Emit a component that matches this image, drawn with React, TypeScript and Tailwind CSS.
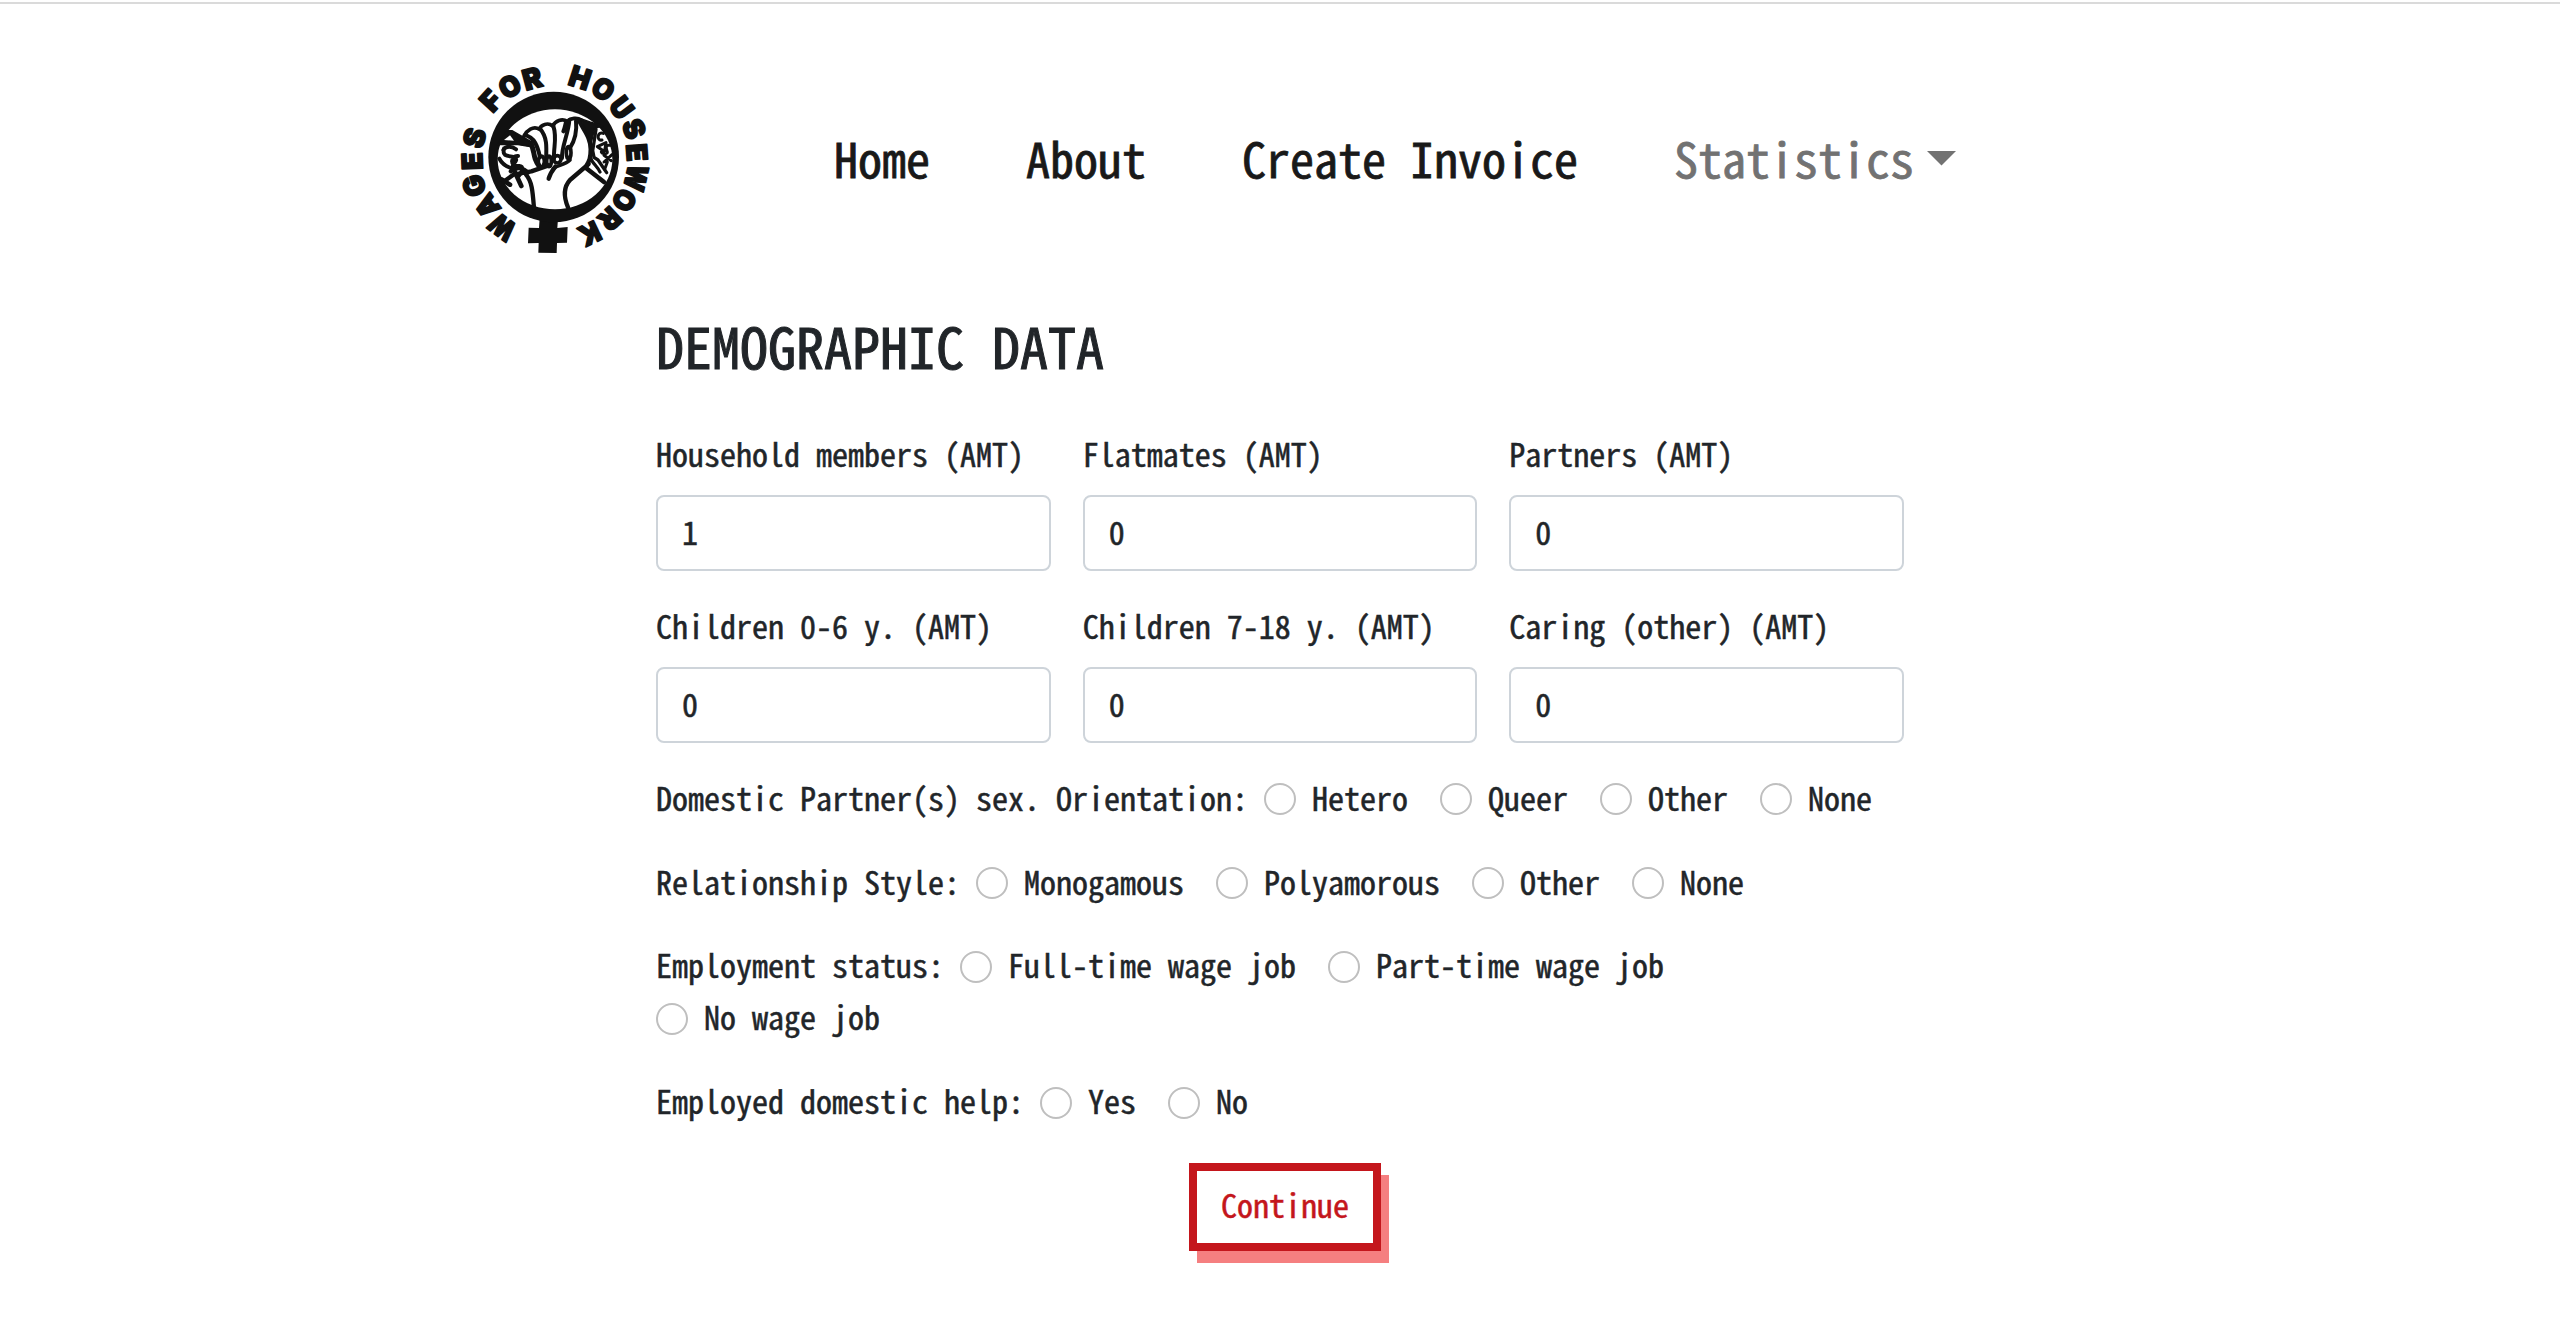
import type { ReactNode } from 'react';

/* Ring lettering: character, centre x, centre y, horizontal scale. */
const RING_LETTERS: [string, number, number, number][] = [
  ['W', 187, 531, 0.84],
  ['A', 141, 468, 0.95],
  ['G', 102, 407, 1],
  ['E', 96, 334, 1],
  ['S', 103, 263, 1],
  ['F', 152, 152, 1],
  ['O', 209, 109, 0.95],
  ['R', 277, 85, 1],
  ['H', 420, 83, 0.98],
  ['O', 490, 117, 0.95],
  ['U', 545, 173, 0.95],
  ['S', 583, 236, 1],
  ['E', 591, 307, 1],
  ['W', 588, 383, 0.85],
  ['O', 553, 451, 0.95],
  ['R', 510, 507, 1],
  ['K', 449, 551, 0.95],
];

function Logo() {
  return (
    <svg viewBox="0 0 690 660" className="h-[220px] w-[230px] shrink-0" fill="#111" stroke="none">
      {RING_LETTERS.map(([ch, x, y, s], i) => {
        const angle = (Math.atan2(x - 341, 325 - y) * 180) / Math.PI;
        return (
          <text
            key={i}
            transform={`translate(${x} ${y}) rotate(${angle}) scale(${s} 1)`}
            y="31"
            textAnchor="middle"
            fontSize="85"
            strokeWidth="5"
            stroke="#111"
            strokeLinejoin="round"
            className="font-['Inter'] font-black"
          >
            {ch}
          </text>
        );
      })}
      <path d="M299 505h55l-2 29 31-3-2 47-30 1-1 30-55-1 1-29-32 1 2-47 31 1z" />
      <circle cx="341" cy="321" r="196" />
      <ellipse cx="345" cy="328" rx="172" ry="150" fill="#fff" />
      <g transform="translate(150 150)" fill="none" stroke="#111" strokeWidth="11" strokeLinecap="round" strokeLinejoin="round">
        {/* left cuff */}
        <path d="M22 134 52 92 66 92 122 124 120 140 84 134z" fill="#111" strokeWidth="4" />
        <path d="M42 120 60 106 72 122z" fill="#fff" stroke="none" />
        <path d="M122 130c10 16 8 32 14 48 4 12 10 18 14 24" strokeWidth="15" />
        <path d="M40 150c8-14 26-12 38-2M42 146c-8 28 22 20 32 26 14 10-10 20-6 30M84 168c-22-2-26 32 2 30 18-2 10 20 0 30M28 176c8 16 22 26 44 30M62 214c20-16 40-10 52 4" strokeWidth="12" />
        <path d="M28 254 70 224 124 214 176 196" strokeWidth="13" />
        <path d="M70 206 94 258M34 238l26 16" strokeWidth="14" />
        {/* fingers */}
        <path d="M102 108c8-16 28-32 46-20 4-14 26-22 40-10 8-16 28-24 44-14 10-10 30-12 42-4" />
        <path d="M104 106c30 4 40 36 46 66M150 86c22 26 20 54 18 96M190 78c12 36 0 64 2 98M238 60c-2 40-24 80-22 114M258 62c4 38-8 66-18 82M228 66c-4 16-4 20-8 28" strokeWidth="12" />
        <ellipse cx="154" cy="184" rx="9" ry="16" />
        <ellipse cx="177" cy="184" rx="7" ry="16" />
        <ellipse cx="202" cy="178" rx="11" ry="11" />
        <ellipse cx="236" cy="158" rx="7" ry="18" />
        <path d="M240 180c-16 16-36 14-50 26" />
        <path d="M196 200c-8 10-16 22-20 36" strokeWidth="13" />
        {/* forearm and thumb */}
        <path d="M108 224c18 20 20 50 24 100" strokeWidth="13" />
        <path d="M234 322c-16-38-12-62 6-82l56-48" strokeWidth="13" />
        <path d="M268 64c16 30 34 50 34 84 0 26-4 34-12 48" strokeWidth="13" />
        {/* right cuff */}
        <path d="M272 56 300 66 340 78 314 84 306 120 302 130 288 96z" fill="#111" strokeWidth="4" />
        <path d="M318 88 308 152 312 172 324 180 350 218M300 170c6 20 24 30 30 46" strokeWidth="10" />
        <path d="M340 100c-18-8-22 24-4 20M322 140l26-12-4 24M322 140l18 12M362 136c-20-4-12 14-10 20s-16 6-18 0M366 164l-24 22M342 166l22 16M352 186l-8 22" strokeWidth="9" />
        <path d="M288 204l54 42" strokeWidth="14" />
      </g>
    </svg>
  );
}

/* Half-width text optically centred in a 1.5em line. */
function T({ children }: { children: ReactNode }) {
  return <span className="block pt-[0.02em] pb-[0.13em] leading-[1.35] whitespace-pre">{children}</span>;
}

function Field({ label, value }: { label: string; value: string }) {
  return (
    <label className="block">
      <T>{label}</T>
      <span className="mt-4 flex h-19 items-center rounded-lg border-2 border-[#ced4da] px-6">
        <T>{value}</T>
      </span>
    </label>
  );
}

function RadioGroup({ label, options }: { label: string; options: string[] }) {
  return (
    <div className="-mr-4 mb-8 flex flex-wrap gap-y-1 pb-1">
      <div className="mr-4">
        <T>{label}</T>
      </div>
      {options.map((o) => (
        <label key={o} className="mr-8 flex items-center gap-4">
          <span className="size-8 rounded-full border-2 border-[#bfbfbf]" />
          <T>{o}</T>
        </label>
      ))}
    </div>
  );
}

const FIELDS = [
  ['Household members (AMT)', '1'],
  ['Flatmates (AMT)', '0'],
  ['Partners (AMT)', '0'],
  ['Children 0-6 y. (AMT)', '0'],
  ['Children 7-18 y. (AMT)', '0'],
  ['Caring (other) (AMT)', '0'],
];

export default function App() {
  return (
    <div className="h-[1344px] overflow-hidden bg-white pt-0.5 font-['Noto_Sans_Mono_CJK_JP','Noto_Sans_CJK_JP',monospace] text-[32px] text-[#212529] [-webkit-text-stroke:0.5px_currentColor] [font-feature-settings:'hwid']">
      <div className="h-0.5 bg-[#dadada]" />
      <header className="flex pt-[46px] pl-[440px]">
        <Logo />
        <nav className="mt-[74px] ml-[164px] flex h-18 gap-24 text-[48px] text-[#191919] [-webkit-text-stroke:0.8px_currentColor]">
          <T>Home</T>
          <T>About</T>
          <T>Create Invoice</T>
          <div className="flex text-[#727272]">
            <T>Statistics</T>
            <svg viewBox="0 0 29 14.5" className="mt-[27px] ml-[13px] h-[14.5px] w-[29px]" fill="currentColor" stroke="none">
              <path d="M0 0h29L14.5 14.5z" />
            </svg>
          </div>
        </nav>
      </header>
      <main className="ml-[656px] w-[1248px] pt-9">
        <h1 className="text-[56px] [-webkit-text-stroke:1px_currentColor]">
          <T>DEMOGRAPHIC DATA</T>
        </h1>
        <div className="mt-[41px] grid grid-cols-3 gap-8">
          {FIELDS.map(([label, value]) => (
            <Field key={label} label={label} value={value} />
          ))}
        </div>
        <div className="mt-8">
          <RadioGroup label="Domestic Partner(s) sex. Orientation:" options={['Hetero', 'Queer', 'Other', 'None']} />
          <RadioGroup label="Relationship Style:" options={['Monogamous', 'Polyamorous', 'Other', 'None']} />
          <RadioGroup label="Employment status:" options={['Full-time wage job', 'Part-time wage job', 'No wage job']} />
          <RadioGroup label="Employed domestic help:" options={['Yes', 'No']} />
        </div>
        <button className="ml-[533px] flex h-22 w-48 items-center justify-center border-8 border-[#c4161c] bg-white text-[#c4161c] shadow-[8px_12px_0_0_#f57f80]">
          <T>Continue</T>
        </button>
      </main>
    </div>
  );
}
